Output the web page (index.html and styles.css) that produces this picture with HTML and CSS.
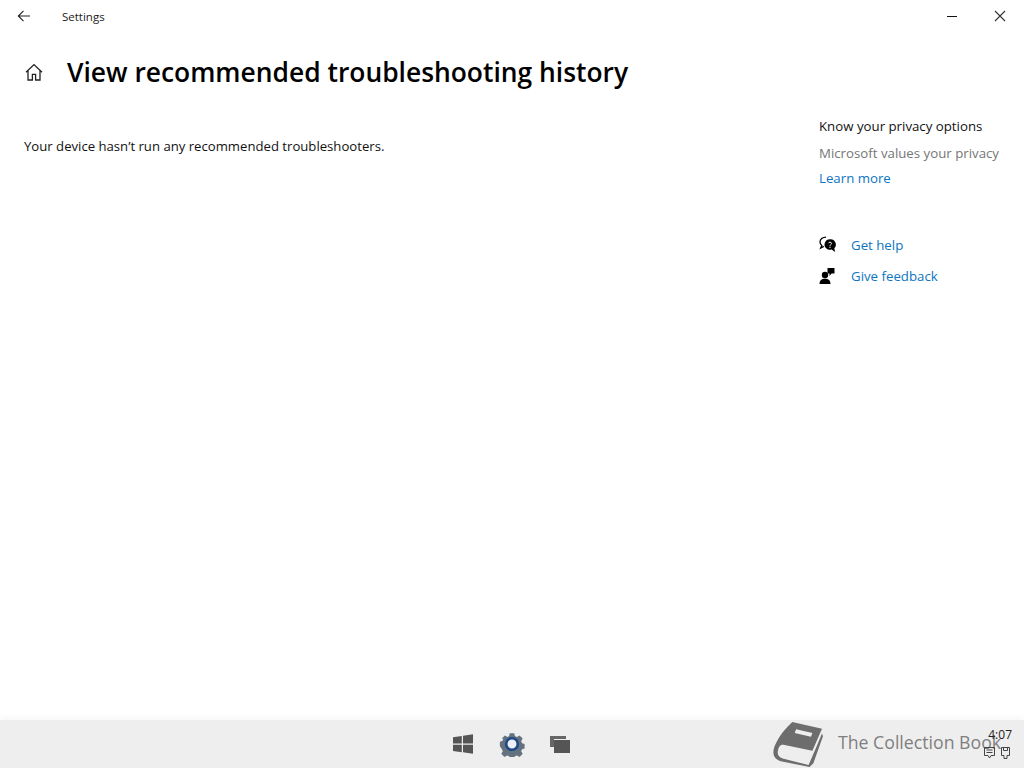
FILE: index.html
```html
<!DOCTYPE html>
<html lang="en">
<head>
    <meta charset="UTF-8">
    <title>Settings</title>
    <link rel="stylesheet" href="styles.css">
</head>
<body>
    <div class="window">
        <div class="titlebar">
            <svg class="back" width="16" height="16" viewBox="0 0 16 16"><path d="M14 8H2.5M7.5 2.8L2.300 8l5.200 5.200" fill="none" stroke="#222" stroke-width="1.100"/></svg>
            <span class="app-name">Settings</span>
            <div class="controls">
                <svg width="12" height="12" viewBox="0 0 12 12"><path d="M1 6.500h10" stroke="#111" stroke-width="1"/></svg>
                <svg width="12" height="12" viewBox="0 0 12 12"><path d="M1 1l10 10M11 1L1 11" stroke="#333" stroke-width="1.100"/></svg>
            </div>
        </div>

        <div class="content">
            <div class="main">
                <div class="heading">
                    <svg class="home" width="20" height="20" viewBox="0 0 20 20"><path d="M2 10.200L10 2.600l8 7.600M4 8.600V18h4.400v-5.600h3.200V18H16V8.600" fill="none" stroke="#222" stroke-width="1.300"/></svg>
                    <h1>View recommended troubleshooting history</h1>
                </div>
                <p class="message">Your device hasn’t run any recommended troubleshooters.</p>
            </div>

            <div class="side">
                <div class="side-title">Know your privacy options</div>
                <div class="side-muted">Microsoft values your privacy</div>
                <a class="link learn" href="#">Learn more</a>
                <div class="help-row first">
                    <svg width="18" height="18" viewBox="0 0 18 18">
                        <path d="M7 1.200C3.600 1.200 1 3.300 1 6c0 1.400.7 2.600 1.800 3.500L1.700 12l3.100-1.600" fill="none" stroke="#000" stroke-width="1.300"/>
                        <path d="M11 3.200a5.500 5.300 0 0 0-3.600 9.300c1.300 1.200 3.500 1.700 5.300 1l3.400 2.500-.8-3.800A5.300 5.300 0 0 0 11 3.200z" fill="#000"/>
                        <path d="M9.500 7.200c.2-1.300 3-1.400 3 .2 0 1.100-1.500 1.100-1.500 2.400M11 10.700v1.300" fill="none" stroke="#fff" stroke-width="1"/>
                    </svg>
                    <a class="link" href="#">Get help</a>
                </div>
                <div class="help-row">
                    <svg width="18" height="18" viewBox="0 0 18 18">
                        <circle cx="6" cy="8" r="3.200" fill="#000"/>
                        <path d="M.5 17c0-3.500 2-5.200 5.500-5.200s5.500 1.700 5.500 5.200z" fill="#000"/>
                        <path d="M8.500 1H15.500v5.500h-3L10.500 9V6.500h-2z" fill="#000"/>
                    </svg>
                    <a class="link" href="#">Give feedback</a>
                </div>
            </div>
        </div>

        <div class="taskbar">
            <svg width="20" height="20" viewBox="0 0 20 20"><path d="M0 3.200l8.800-1.300v7.600H0zM10 1.700L20 .2v9.300H10zM0 10.700h8.800v7.500L0 17zM10 10.700h10v9.100l-10-1.500z" fill="#555"/></svg>
            <svg width="26" height="26" viewBox="0 0 26 26">
                <path d="M10.500 1h5l.7 3.200 2.300 1 2.900-1.700 3.500 3.500-1.700 2.800 1 2.400 2.800.8v5l-2.800.7-1 2.300 1.700 2.900-3.500 3.500-2.900-1.700-2.300 1-.7 2.800h-5l-.7-2.800-2.300-1-2.900 1.700-3.500-3.500 1.700-2.900-1-2.300L-.5 15.500v-5l2.800-.8 1-2.400L1.600 7 5.100 3.500 8 5.200l1.800-1z" fill="#64717f" transform="translate(1.300 1.300) scale(.9)"/>
                <circle cx="13" cy="13" r="5.800" fill="#eef0f8" stroke="#1d4a87" stroke-width="2.600"/>
            </svg>
            <svg class="views" width="20" height="17" viewBox="0 0 20 17"><path d="M0 0h16v3H4v8H0z" fill="#666"/><path d="M4 4h16v13H4z" fill="#555"/></svg>
        </div>

        <div class="watermark">
            <svg class="book" width="52" height="46" viewBox="0 0 54 48">
                <path d="M20 1L51 8 41 31 12 25C7 24 6 27 5 31 4 35 6 38 10 39L37 46 46 25 51 13 52 16 42 44 38 48 8 42C1 40-1 35 1 28 3 22 8 12 20 1z" fill="#6d6d6d"/>
                <path d="M24 8.500L41 12.500 39.500 16.500 22.500 12.500z" fill="#eee"/>
            </svg>
            <span class="wm-text">The Collection Book</span>
        </div>
        <div class="tray">
            <span class="clock">4:07</span>
            <div class="tray-icons">
                <svg width="12" height="12" viewBox="0 0 12 12"><path d="M.5.500h10v8H7L5.500 11 4 8.500H.5zM2.500 3h6M2.500 5.500h6" fill="none" stroke="#444" stroke-width="1"/></svg>
                <svg width="9" height="12" viewBox="0 0 9 12"><path d="M.5.500h8v8H6v3H3v-3H.5zM2.500.500v3h4v-3" fill="none" stroke="#444" stroke-width="1"/></svg>
            </div>
        </div>
    </div>
</body>
</html>
```

FILE: styles.css
```css
html, body { margin: 0; height: 100%; }
body { font-family: "Open Sans", "Noto Sans", sans-serif; background: #fff; color: #000; overflow: hidden; }
a { text-decoration: none; }

.window { position: relative; height: 768px; display: flex; flex-direction: column; }

.titlebar { height: 32px; display: flex; align-items: center; padding: 0 18px 0 16px; box-sizing: border-box; flex: none; }
.app-name { margin-left: 30px; font-size: 11.5px; color: #222; }
.controls { margin-left: auto; display: flex; gap: 36px; }

.content { flex: 1; display: flex; justify-content: space-between; }
.main { padding: 0 0 0 24px; }
.heading { display: flex; align-items: center; height: 48px; margin-top: 16px; }
.home { margin-right: 23px; }
h1 { margin: 0; font-size: 26.4px; font-weight: 600; white-space: nowrap; }
.message { margin: 40px 0 0; font-size: 13.15px; line-height: 20px; color: #111; white-space: nowrap; }

.side { width: 205px; padding-top: 84px; font-size: 13.25px; }
.side-title { line-height: 20px; color: #111; }
.side-muted { line-height: 20px; margin-top: 7px; color: #767676; }
.link { color: #0b75c2; }
.learn { display: block; line-height: 20px; margin-top: 5px; }
.help-row { display: flex; align-items: center; height: 31px; gap: 14px; }
.help-row.first { margin-top: 41px; }

.taskbar { height: 48px; flex: none; background: #eeeeee; display: flex; align-items: center; justify-content: center; gap: 26px; padding-right: 2px; box-shadow: 0 -3px 5px #fbf7f8; }
.views { margin-left: -1px; }

.watermark { position: absolute; left: 773px; top: 718px; height: 48px; display: flex; align-items: center; gap: 13px; }
.book { margin-top: 4px; }
.wm-text { font-size: 17.7px; color: #7f7f7f; white-space: nowrap; }

.tray { position: absolute; right: 12px; top: 727px; display: flex; flex-direction: column; align-items: flex-end; }
.clock { font-size: 12px; line-height: 16px; color: #222; }
.tray-icons { display: flex; gap: 5px; margin-top: 4px; margin-right: 2px; }
```
